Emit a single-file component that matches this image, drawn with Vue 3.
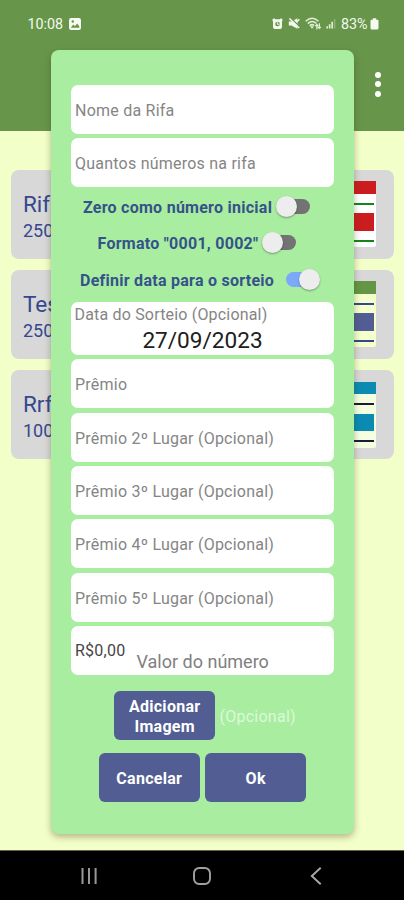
<script setup>
import { ref } from 'vue'

const raffles = [
  { id: 1, name: 'Rifa', total: '250', bar: '#cb1d20', block: '#cb1d20', line: '#16841c', paper: '#ffffff' },
  { id: 2, name: 'Teste', total: '250', bar: '#649645', block: '#525e93', line: '#35478d', paper: '#f5ffcc' },
  { id: 3, name: 'Rrf', total: '100', bar: '#0c8bb2', block: '#0c8bb2', line: '#1c1b38', paper: '#f5ffe0' }
]

const switches = ref([
  { id: 'zero', label: 'Zero como número inicial', on: false },
  { id: 'format', label: 'Formato "0001, 0002"', on: false },
  { id: 'draw', label: 'Definir data para o sorteio', on: true }
])

const prizes = [
  'Prêmio',
  'Prêmio 2º Lugar (Opcional)',
  'Prêmio 3º Lugar (Opcional)',
  'Prêmio 4º Lugar (Opcional)',
  'Prêmio 5º Lugar (Opcional)'
]
</script>

<template>
  <div class="screen">
    <header class="app-header">
      <div class="status-bar">
        <span class="time">10:08</span>
        <svg class="photo-icon" viewBox="0 0 12 12">
          <rect width="12" height="12" rx="2.2" fill="#f6fbf2" />
          <path d="M1.8 9.8 4.3 6.6 6 8.3 8.2 5.6 10.3 8.2V9.8Z" fill="#679549" />
          <circle cx="3.8" cy="3.5" r="1.2" fill="#679549" />
        </svg>
        <div class="status-right">
          <svg width="11" height="11" viewBox="0 0 11 11">
            <path d="M0.2 1.8 2 0.2 3.4 1.2H7.6L9 0.2 10.8 1.8 10 3.6V9.6L8.8 10.9H2.2L1 9.6V3.6Z" fill="#f2f8ee" />
            <circle cx="5.5" cy="6" r="2.3" fill="#679549" />
            <path d="M5.4 4.3V6.3H7.2" fill="none" stroke="#f2f8ee" stroke-width="1" />
          </svg>
          <svg class="mute-icon" width="12" height="11" viewBox="0 0 12 11">
            <path d="M0.8 3.5H3.4L9.4 0.2V10.8L3.4 7.6H0.8Z" fill="#f2f8ee" />
            <path d="M2.6 0 11.8 8.8" stroke="#679549" stroke-width="1.3" />
            <path d="M1.4 0.5 11.2 10" stroke="#f2f8ee" stroke-width="1.5" />
            <path d="M9 3.7 11.4 1.3" stroke="#f2f8ee" stroke-width="1.3" />
          </svg>
          <svg class="wifi-icon" width="17" height="14" viewBox="0 0 17 14">
            <g fill="none" stroke="#e2eed9" stroke-width="1.5">
              <path d="M0.7 4.2Q7 -1.7 13.5 4.2" />
              <path d="M2.8 6.6Q7 2.6 11.4 6.4" />
              <path d="M4.7 8.8Q7 6.6 9.2 8.5" />
              <path d="M11.9 12.5V7.6M10.4 9 11.9 7.5 13.2 9M14.4 6.2V11.3M12.9 9.8 14.4 11.3 15.9 9.8" stroke-width="1.2" />
            </g>
            <path d="M5 9.3H9L7 11.8Z" fill="#e2eed9" />
          </svg>
          <svg class="signal-icon" width="10" height="11" viewBox="0 0 10 11">
            <path d="M0.3 8.3H2V10.5H0.3ZM2.8 6.2H4.5V10.5H2.8ZM5.3 3.8H7V10.5H5.3Z" fill="#dcebd2" />
            <path d="M7.9 1H9.4V10.5H7.9Z" fill="#8eb277" />
          </svg>
          <span class="battery-text">83%</span>
          <svg width="9" height="12" viewBox="0 0 9 12">
            <path d="M2.8 0.3H6.2V1.8H7.5Q8.5 1.8 8.5 2.8V10.3Q8.5 11.4 7.5 11.4H1.5Q0.5 11.4 0.5 10.3V2.8Q0.5 1.8 1.5 1.8H2.8Z" fill="#f6fbf2" />
          </svg>
        </div>
      </div>
      <button class="menu-btn" aria-label="Menu">
        <i></i><i></i><i></i>
      </button>
    </header>

    <main class="raffle-list">
      <article v-for="raffle in raffles" :key="raffle.id" class="raffle-card">
        <div class="raffle-info">
          <span class="raffle-name">{{ raffle.name }}</span>
          <span class="raffle-total">{{ raffle.total }}</span>
        </div>
        <div class="thumb" :style="{ backgroundColor: raffle.paper }">
          <div class="thumb-bar" :style="{ backgroundColor: raffle.bar }"></div>
          <div class="thumb-line" :style="{ backgroundColor: raffle.line }"></div>
          <div class="thumb-block" :style="{ backgroundColor: raffle.block }"></div>
          <div class="thumb-line" :style="{ backgroundColor: raffle.line }"></div>
        </div>
      </article>
    </main>

    <nav class="nav-bar">
      <svg width="18" height="18" viewBox="0 0 18 18">
        <path d="M1.5 1V17M8 1V17M14.6 1V17" stroke="#989898" stroke-width="2" />
      </svg>
      <svg class="home-icon" width="20" height="20" viewBox="0 0 20 20">
        <rect x="2" y="2" width="16" height="16" rx="5.2" fill="none" stroke="#a0a0a0" stroke-width="1.9" />
      </svg>
      <svg width="12" height="18" viewBox="0 0 12 18">
        <path d="M10.7 0.8 1.8 9 10.7 17.2" fill="none" stroke="#a8a8a8" stroke-width="1.9" />
      </svg>
    </nav>

    <section class="dialog">
      <div class="field"><span class="hint">Nome da Rifa</span></div>
      <div class="field"><span class="hint">Quantos números na rifa</span></div>

      <div class="switches">
        <div v-for="item in switches" :key="item.id" :class="['switch-row', item.id]" @click="item.on = !item.on">
          <span class="switch-label">{{ item.label }}</span>
          <span :class="['toggle', { on: item.on }]"><span class="knob"></span></span>
        </div>
      </div>

      <div class="field date-field">
        <span class="hint">Data do Sorteio (Opcional)</span>
        <span class="date">27/09/2023</span>
      </div>
      <div v-for="prize in prizes" :key="prize" class="field">
        <span class="hint">{{ prize }}</span>
      </div>
      <div class="field value-field">
        <span class="currency">R$0,00</span>
        <span class="value-hint">Valor do número</span>
      </div>

      <div class="image-row">
        <button class="btn">Adicionar<br />Imagem</button>
        <span class="optional">(Opcional)</span>
      </div>
      <div class="actions">
        <button class="btn">Cancelar</button>
        <button class="btn">Ok</button>
      </div>
    </section>
  </div>
</template>

<style>
body {
  margin: 0;
}
</style>

<style scoped>
.screen {
  position: relative;
  display: flex;
  flex-direction: column;
  width: 404px;
  height: 900px;
  overflow: hidden;
  background-color: #f3ffc8;
  font-family: Roboto, "Liberation Sans", sans-serif;
}

.app-header {
  display: flex;
  flex-direction: column;
  height: 130.5px;
  background-color: #67964a;
}

.status-bar {
  display: flex;
  align-items: center;
  height: 47px;
  padding: 0 25px 0 27.5px;
  color: #f4f9ef;
}

.time {
  width: 41px;
  font-size: 14.3px;
  white-space: nowrap;
}

.photo-icon {
  width: 12px;
  height: 12px;
}

.status-right {
  display: flex;
  align-items: center;
  margin-left: auto;
}

.mute-icon {
  margin-left: 5px;
}

.wifi-icon {
  margin-left: 5px;
}

.signal-icon {
  margin-left: 4px;
}

.battery-text {
  width: 29px;
  margin-left: 5px;
  font-size: 14.3px;
}

.menu-btn {
  display: flex;
  flex-direction: column;
  align-items: center;
  gap: 3.7px;
  align-self: flex-end;
  margin: 24.5px 22.7px 0 0;
  padding: 0;
  border: none;
  background: none;
}

.menu-btn i {
  width: 6px;
  height: 6px;
  border-radius: 50%;
  background-color: #fff;
}

.raffle-list {
  display: flex;
  flex: 1;
  flex-direction: column;
  gap: 11.3px;
  padding: 39px 10px 0 11px;
}

.raffle-card {
  display: flex;
  align-items: center;
  justify-content: space-between;
  box-sizing: border-box;
  height: 89px;
  padding: 0 18px 0 12px;
  border-radius: 8px;
  background-color: #d8d8d8;
  color: #35478d;
}

.raffle-info {
  display: flex;
  flex-direction: column;
  padding-top: 3px;
}

.raffle-name {
  font-size: 22.5px;
  line-height: 30px;
}

.raffle-total {
  font-size: 18px;
  line-height: 24px;
}

.thumb {
  display: flex;
  flex-direction: column;
  width: 66px;
  height: 66px;
  border-radius: 0 0 2px 2px;
}

.thumb-bar {
  height: 12.5px;
}

.thumb-line {
  height: 2px;
  margin: 9px 2.5px 0;
}

.thumb-block {
  height: 17.5px;
  margin: 8.5px 2.5px 0;
}

.nav-bar {
  display: flex;
  align-items: center;
  justify-content: space-between;
  box-sizing: border-box;
  height: 50px;
  padding: 1px 82px 0 81px;
  border-top: 1px solid #5f6350;
  background-color: #000;
}

.home-icon {
  margin-right: 5px;
}

/* The dialog lies over the list */
.dialog {
  position: absolute;
  top: 49.5px;
  left: 51px;
  display: flex;
  flex-direction: column;
  gap: 4.4px;
  box-sizing: border-box;
  width: 303px;
  height: 784px;
  padding: 35.5px 20px 0;
  border-radius: 8px;
  background-color: #a9eda1;
  box-shadow: 0 3px 7px rgba(60, 50, 20, 0.36);
}

.field {
  display: flex;
  align-items: center;
  box-sizing: border-box;
  flex-shrink: 0;
  height: 49px;
  padding: 2px 4px 0;
  border-radius: 7px;
  background-color: #fff;
}

.hint {
  color: #858585;
  font-size: 16px;
  letter-spacing: 0.23px;
  white-space: nowrap;
}

.switches {
  display: flex;
  flex-direction: column;
  height: 109.5px;
  margin-top: -4px;
}

.switch-row {
  display: flex;
  flex-shrink: 0;
  align-items: center;
  height: 36.7px;
  padding-left: 12px;
  cursor: pointer;
}

.switch-row.format {
  padding-left: 26.5px;
}

.switch-row.draw {
  padding-left: 9px;
}

.switch-label {
  padding-top: 2px;
  color: #35538a;
  font-size: 16px;
  font-weight: 700;
  letter-spacing: 0.26px;
  white-space: nowrap;
}

.toggle {
  display: flex;
  align-items: center;
  width: 28px;
  height: 15px;
  margin-left: 9.5px;
  border-radius: 8px;
  background-color: #737373;
}

.knob {
  flex-shrink: 0;
  width: 21px;
  height: 21px;
  margin-left: -6px;
  border-radius: 50%;
  background-color: #ededed;
  box-shadow: 0 1px 2px rgba(0, 0, 0, 0.35);
}

.toggle.on {
  margin-left: 12px;
  background-color: #7ba9f8;
}

.toggle.on .knob {
  margin-left: 12.5px;
}

.date-field {
  flex-direction: column;
  align-items: flex-start;
  height: 53.2px;
  padding-top: 3px;
}

.date-field .hint {
  margin-left: -0.5px;
  line-height: 20px;
  letter-spacing: 0.18px;
}

.date {
  align-self: center;
  padding-top: 1px;
  color: #202020;
  font-size: 22.6px;
  line-height: 30px;
}

.value-field {
  align-items: flex-start;
  padding-top: 0;
}

.currency {
  width: 61.5px;
  color: #454545;
  font-size: 16px;
  line-height: 49px;
  letter-spacing: 0.25px;
}

.value-hint {
  padding-top: 24px;
  color: #808080;
  font-size: 18px;
  line-height: 24px;
  white-space: nowrap;
}

.image-row {
  display: flex;
  align-items: center;
  gap: 4.5px;
  margin: 11.5px 0 0 43.4px;
}

.btn {
  box-sizing: border-box;
  width: 100.6px;
  height: 49px;
  padding: 2px 0 0;
  border: none;
  border-radius: 6px;
  background-color: #525e93;
  color: #fff;
  font-family: inherit;
  font-size: 16px;
  font-weight: 700;
  line-height: 19.5px;
  letter-spacing: 0.28px;
}

.optional {
  padding-top: 1px;
  color: #dcf9d8;
  font-size: 16px;
  letter-spacing: 0.25px;
}

.actions {
  display: flex;
  gap: 5.8px;
  margin: 8.5px 0 0 28px;
}
</style>
